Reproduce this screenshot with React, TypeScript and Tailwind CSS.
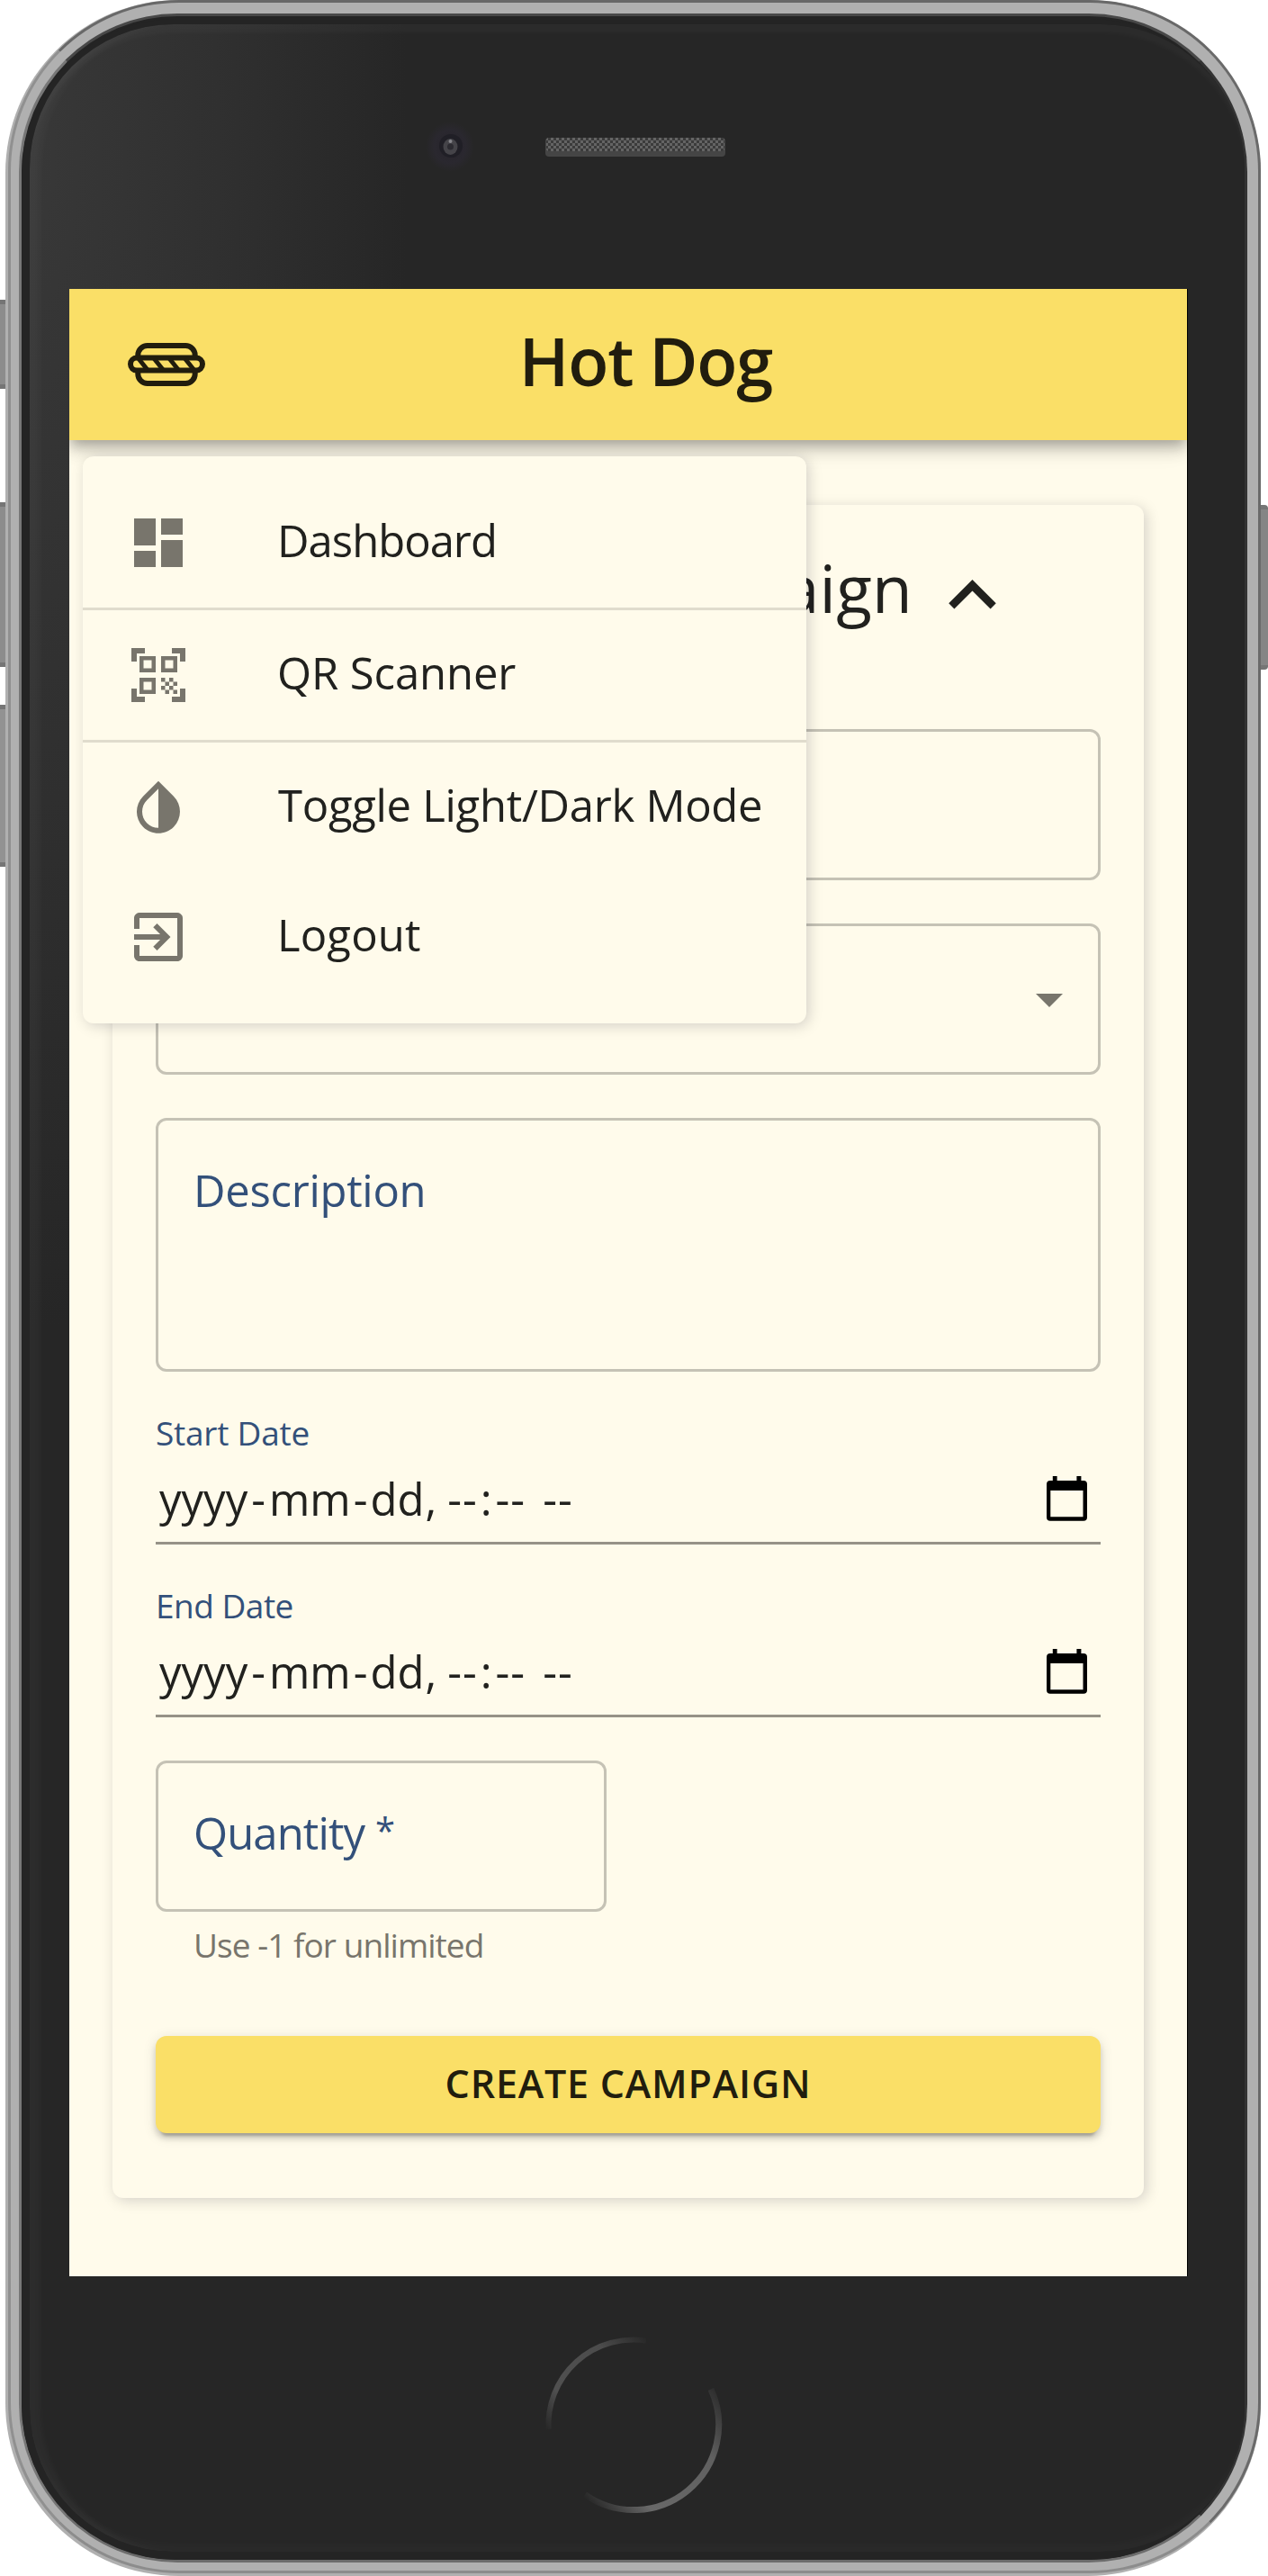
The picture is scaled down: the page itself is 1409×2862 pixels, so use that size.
import type { ReactNode } from "react";

function HotDogIcon() {
  return (
    <svg width="90" height="54" viewBox="140 378 90 54" fill="none" stroke="#211d0e" strokeWidth="6">
      <rect x="153.3" y="384" width="63.4" height="42" rx="10.5" />
      <rect x="145" y="397.6" width="80" height="14" rx="7" fill="#fadf67" />
      <g strokeWidth="5">
        <path d="M154 398.5l10.4 13M171.3 398.5l10.4 13M188.3 398.5l10.4 13M205.6 398.5l10.4 13" />
      </g>
    </svg>
  );
}

function Icon({ children, className }: { children: ReactNode; className: string }) {
  return (
    <svg viewBox="0 0 24 24" fill="currentColor" className={className}>
      {children}
    </svg>
  );
}

function DashboardIcon() {
  return <path d="M3 13h8V3H3v10zm0 8h8v-6H3v6zm10 0h8V11h-8v10zm0-18v6h8V3h-8z" />;
}

function QrScannerIcon() {
  return (
    <path d="M9.5 6.5v3h-3v-3h3M11 5H5v6h6V5zm-1.5 9.5v3h-3v-3h3M11 13H5v6h6v-6zm6.5-6.5v3h-3v-3h3M19 5h-6v6h6V5zm-6 8h1.5v1.5H13V13zm1.5 1.5H16V16h-1.5v-1.5zM16 13h1.5v1.5H16V13zm-3 3h1.5v1.5H13V16zm1.5 1.5H16V19h-1.5v-1.5zM16 16h1.5v1.5H16V16zm1.5-1.5H19V16h-1.5v-1.5zm0 3H19V19h-1.5v-1.5zM22 7h-2V4h-3V2h5v5zm0 15v-5h-2v3h-3v2h5zM2 22h5v-2H4v-3H2v5zM2 2v5h2V4h3V2H2z" />
  );
}

function InvertIcon() {
  return (
    <path d="M17.66 7.93 12 2.27 6.34 7.93c-3.12 3.12-3.12 8.19 0 11.31C7.9 20.8 9.95 21.58 12 21.58c2.05 0 4.1-.78 5.66-2.34 3.12-3.12 3.12-8.19 0-11.31zM12 19.59c-1.6 0-3.11-.62-4.24-1.76C6.62 16.69 6 15.19 6 13.59s.62-3.11 1.76-4.24L12 5.1v14.49z" />
  );
}

function ExitIcon() {
  return (
    <path d="M10.09 15.59 11.5 17l5-5-5-5-1.41 1.41L12.67 11H3v2h9.67l-2.58 2.59zM19 3H5c-1.11 0-2 .9-2 2v4h2V5h14v14H5v-4H3v4c0 1.1.89 2 2 2h14c1.1 0 2-.9 2-2V5c0-1.1-.9-2-2-2z" />
  );
}

function CalendarIcon() {
  return (
    <svg width="45" height="50" viewBox="0 0 45 50" className="mr-[15px]">
      <path
        fillRule="evenodd"
        d="M6.8 0h4.8v5h21.8V0h5v5H41a4 4 0 0 1 4 4v36.7a4 4 0 0 1-4 4H4a4 4 0 0 1-4-4V9a4 4 0 0 1 4-4h2.8zM4.3 16v29.3h36.2V16z"
      />
    </svg>
  );
}

function MenuItem({ icon, label, className }: { icon: ReactNode; label: string; className: string }) {
  return (
    <li className="flex h-36 shrink-0 items-center pl-12">
      <Icon className="mr-24 size-18 shrink-0 text-[#78756c]">{icon}</Icon>
      <span className={"pb-[7px] text-[49px] leading-18 whitespace-nowrap " + className}>{label}</span>
    </li>
  );
}

function NavMenu() {
  return (
    <ul className="absolute top-[186px] left-[15px] flex h-[630px] w-[804px] flex-col rounded-xl bg-[#fffbeb] py-6 shadow-[3px_3px_15px_rgba(0,0,30,0.17)]">
      <MenuItem icon={<DashboardIcon />} label="Dashboard" className="tracking-[-1px]" />
      <li className="h-[3px] shrink-0 bg-[#e0dccd]" />
      <MenuItem icon={<QrScannerIcon />} label="QR Scanner" className="tracking-[-0.1px]" />
      <li className="h-[3px] shrink-0 bg-[#e0dccd]" />
      <MenuItem icon={<InvertIcon />} label="Toggle Light/Dark Mode" className="ml-px tracking-[-0.29px]" />
      <MenuItem icon={<ExitIcon />} label="Logout" className="tracking-[0.16px]" />
    </ul>
  );
}

function DateField({ label, className }: { label: string; className: string }) {
  return (
    <label className="mt-12 block">
      <span className={"block h-12 text-[37px] leading-10 text-[#33507a] " + className}>{label}</span>
      <span className="flex h-24 items-center justify-between border-b-[3px] border-[#969287] pb-[3px] pl-1">
        <span className="flex text-[49px] leading-18">
          <span className="mr-1">yyyy</span>
          <span className="mr-1">-</span>
          <span className="mr-[3px]">mm</span>
          <span className="mr-[3px]">-</span>
          <span className="mr-px">dd</span>
          <span className="mr-3">,</span>
          <span className="mr-[3px] tracking-[1px]">--</span>
          <span className="mr-1">:</span>
          <span className="mr-[19px] tracking-[1px]">--</span>
          <span className="tracking-[1px]">--</span>
        </span>
        <CalendarIcon />
      </span>
    </label>
  );
}

function CampaignCard() {
  return (
    <section className="mx-12 mt-18 flex flex-col rounded-xl bg-[#fffbeb] px-12 pt-12 pb-18 shadow-[3px_3px_15px_rgba(0,0,30,0.17)]">
      <div className="flex h-[105px] items-center justify-end pr-[90px]">
        <h2 className="pb-[17px] text-[73px] leading-[86px] tracking-[0.2px] whitespace-nowrap">Create New Campaign</h2>
        <Icon className="ml-3.5 size-[105px] shrink-0">
          <path d="m12 8-6 6 1.41 1.41L12 10.83l4.59 4.58L18 14z" />
        </Icon>
      </div>
      <div className="mt-24 h-42 rounded-xl border-[3px] border-[#c5c2b5]" />
      <div className="mt-12 flex h-42 items-center justify-end rounded-xl border-[3px] border-[#c5c2b5] pr-[18px]">
        <Icon className="size-18 text-[#78756c]">
          <path d="m7 10 5 5 5-5z" />
        </Icon>
      </div>
      <div className="mt-12 h-[282px] rounded-xl border-[3px] border-[#c5c2b5] pt-[41px] pl-[39px] text-[49px] leading-18 tracking-[-0.3px] text-[#33507a]">
        Description
      </div>
      <DateField label="Start Date" className="tracking-[-0.23px]" />
      <DateField label="End Date" className="tracking-[-0.5px]" />
      <div className="mt-12 flex h-42 w-[501px] items-center rounded-xl border-[3px] border-[#c5c2b5] pb-2 pl-[39px] text-[#33507a]">
        <span className="text-[49px] leading-18 tracking-[-0.9px]">Quantity</span>
        <span className="ml-3 pb-1 text-[40px] leading-18">*</span>
      </div>
      <p className="mt-[7px] pl-[42px] text-[37px] leading-15 tracking-[-0.95px] text-[#78756c]">Use -1 for unlimited</p>
      <button className="mt-[71px] flex h-27 items-center justify-center rounded-xl bg-[#fadf67] pb-0.5 text-[43px] leading-18 font-semibold tracking-[0.8px] text-[#211d0e] shadow-[0_9px_3px_-6px_rgba(0,0,0,0.2),0_6px_6px_0_rgba(0,0,0,0.14),0_3px_15px_0_rgba(0,0,0,0.12)]">
        CREATE CAMPAIGN
      </button>
    </section>
  );
}

function Screen() {
  return (
    <main className="relative ml-11 h-[2208px] w-[1242px] overflow-hidden bg-[#fffbeb] text-[#21211e]">
      <header className="relative flex h-42 items-center bg-[#fadf67] pl-12 text-[#211d0e] shadow-[0_6px_12px_-3px_rgba(0,0,0,0.2),0_12px_15px_0_rgba(0,0,0,0.14),0_3px_30px_0_rgba(0,0,0,0.12)]">
        <button className="flex size-30 items-center justify-center">
          <HotDogIcon />
        </button>
        <h1 className="flex-1 pr-[129px] pb-2 text-center text-[74px] leading-24 font-semibold tracking-[-1.2px]">Hot Dog</h1>
      </header>
      <div className="flow-root">
        <CampaignCard />
      </div>
      <NavMenu />
    </main>
  );
}

function Earpiece() {
  return (
    <svg width="340" height="60" viewBox="470 135 340 60" className="ml-[437px]">
      <defs>
        <pattern id="mesh" x="606" y="153" width="6" height="6" patternUnits="userSpaceOnUse">
          <rect width="6" height="6" fill="#3b3b3b" />
          <rect width="3" height="3" fill="#646464" />
          <rect x="3" y="3" width="3" height="3" fill="#646464" />
        </pattern>
        <radialGradient id="lens">
          <stop offset="0" stopColor="#26232b" />
          <stop offset="0.65" stopColor="#2a282f" />
          <stop offset="1" stopColor="#2a282f" stopOpacity="0" />
        </radialGradient>
      </defs>
      <ellipse cx="500" cy="163" rx="27" ry="28" fill="url(#lens)" />
      <circle cx="501" cy="162" r="13" fill="#201f26" />
      <ellipse cx="500.500" cy="163" rx="8" ry="9" fill="#454449" />
      <circle cx="500.500" cy="163" r="3.500" fill="#2c2b31" />
      <circle cx="500.500" cy="157" r="2" fill="#85858a" />
      <rect x="606" y="153" width="200" height="21" rx="4" fill="#454545" />
      <rect x="607" y="153" width="198" height="15" rx="3" fill="url(#mesh)" />
    </svg>
  );
}

function HomeButton() {
  return (
    <svg width="210" height="210" viewBox="602 2590 210 210" fill="none" className="ml-[567px]">
      <defs>
        <linearGradient id="arcTop" x1="608" y1="2700" x2="722" y2="2598" gradientUnits="userSpaceOnUse">
          <stop offset="0" stopColor="#262626" />
          <stop offset="0.25" stopColor="#505050" />
          <stop offset="0.7" stopColor="#4c4c4c" />
          <stop offset="1" stopColor="#262626" />
        </linearGradient>
        <linearGradient id="arcBottom" x1="802" y1="2650" x2="650" y2="2775" gradientUnits="userSpaceOnUse">
          <stop offset="0" stopColor="#262626" />
          <stop offset="0.3" stopColor="#606060" />
          <stop offset="0.75" stopColor="#686868" />
          <stop offset="1" stopColor="#262626" />
        </linearGradient>
      </defs>
      <path d="M611.600 2700A94.500 94.500 0 0 1 720 2601.500" stroke="url(#arcTop)" strokeWidth="6" />
      <path d="M792 2655.500A94.500 94.500 0 0 1 652 2772.500" stroke="url(#arcBottom)" strokeWidth="7" />
    </svg>
  );
}

export default function App() {
  return (
    <div className="relative h-[2862px] w-[1409px] overflow-hidden bg-white pl-1.5 font-['Open_Sans',sans-serif]">
      <div className="absolute top-[333px] left-0 h-[99px] w-2.5 border-y-[5px] border-r-[3px] border-[#757575] bg-[#8c8c8c]" />
      <div className="absolute top-[558px] left-0 h-[183px] w-2.5 border-y-[5px] border-r-[3px] border-[#757575] bg-[#8c8c8c]" />
      <div className="absolute top-[783px] left-0 h-[180px] w-2.5 border-y-[5px] border-r-[3px] border-[#757575] bg-[#929292]" />
      <div className="absolute top-[561px] right-0 h-[183px] w-2.5 rounded-r-sm border-y-[5px] border-[#757575] bg-[#858585]" />

      <div className="relative h-[2862px] w-[1395px] rounded-[192px] bg-[#b0b0b0] pb-[3px] pl-[3px]">
        <div className="h-full rounded-[190px] border-[3px] border-t-[#686868] border-r-[#6a6a6a] border-b-[#8c8c8c] border-l-[#909090] bg-[#b0b0b0] pt-3 pr-3 pb-[9px] pl-[9px]">
          <div className="h-full rounded-[176px] border-[3px] border-t-[#484848] border-r-[#333333] border-b-[#6c6c6c] border-l-[#777777] bg-[#242424] pt-[3px]">
            <div className="h-full rounded-[172px] bg-[#242424] pt-1.5 pb-[9px] pl-[9px]">
              <div className="flex h-full flex-col rounded-[160px] bg-[#262626] bg-[radial-gradient(ellipse_420px_1300px_at_0px_150px,#383838_0%,#303030_50%,#262626_100%)] shadow-[inset_14px_0_8px_-3px_rgba(255,255,255,0.035),inset_0_12px_6px_-3px_rgba(255,255,255,0.03),inset_0_-12px_8px_-3px_rgba(255,255,255,0.02)]">
                <div className="flex h-[294px] shrink-0 pt-[108px]">
                  <Earpiece />
                </div>
                <div className="flex shrink-0">
                  <Screen />
                  <div className="w-px bg-black" />
                </div>
                <div className="flex flex-1 pt-[60px]">
                  <HomeButton />
                </div>
              </div>
            </div>
          </div>
        </div>
      </div>
    </div>
  );
}
